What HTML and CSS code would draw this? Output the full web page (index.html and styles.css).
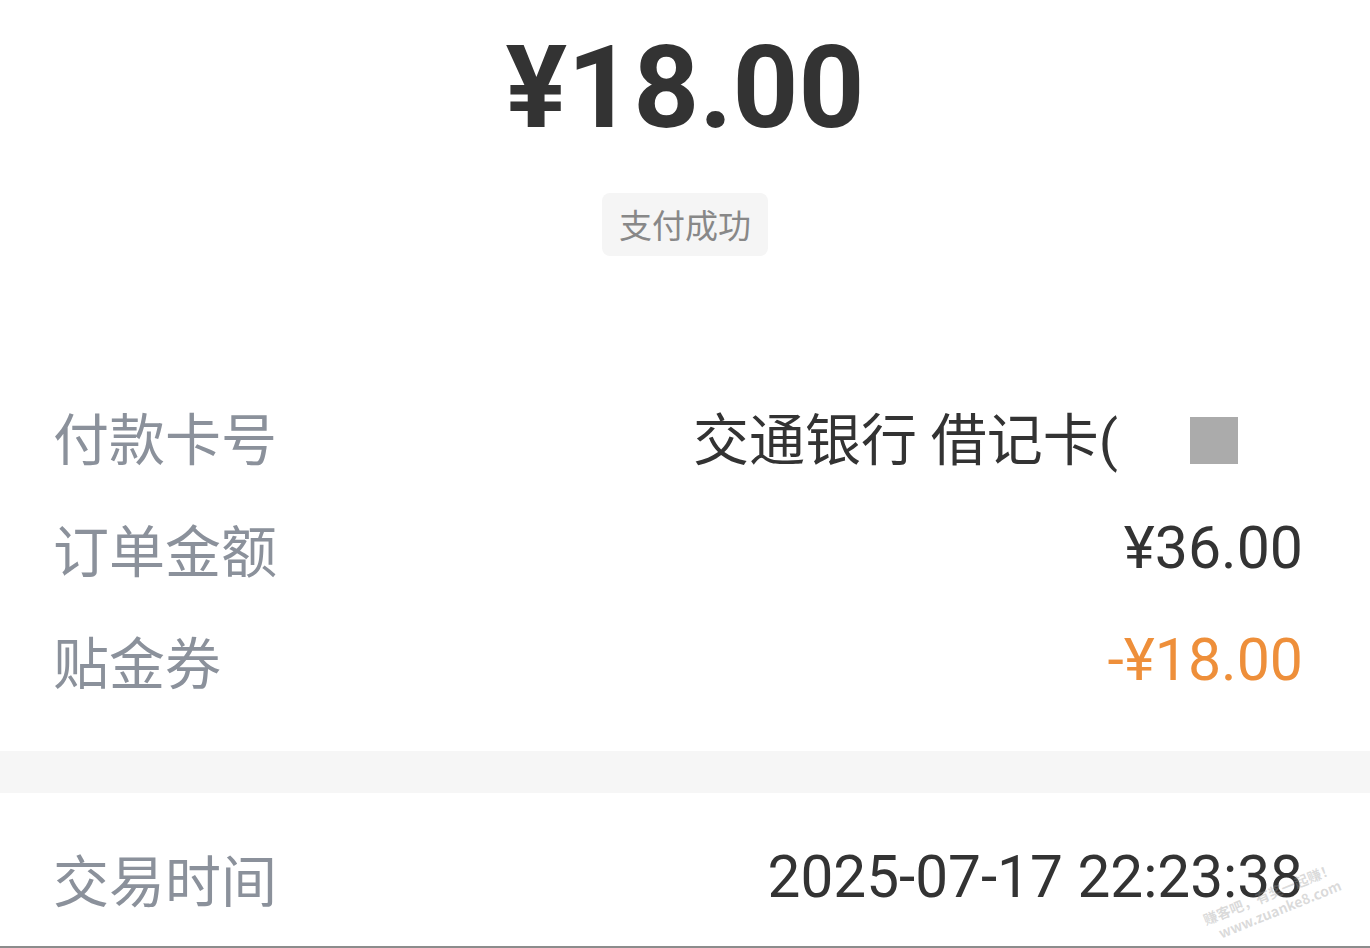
FILE: index.html
```html
<!DOCTYPE html>
<html lang="zh-CN">
<head>
    <meta charset="UTF-8">
    <meta name="viewport" content="width=device-width, initial-scale=1.0">
    <title>交易详情</title>
    <link rel="stylesheet" href="styles.css">
</head>
<body>

    <div class="page">
        <div class="summary">
            <div class="amount">¥18.00</div>
            <div class="status">支付成功</div>
        </div>

        <div class="details">
            <div class="row">
                <span class="label">付款卡号</span>
                <span class="value card">交通银行 借记卡(<span class="mask"></span></span>
            </div>
            <div class="row">
                <span class="label">订单金额</span>
                <span class="value">¥36.00</span>
            </div>
            <div class="row">
                <span class="label">贴金券</span>
                <span class="value discount">-¥18.00</span>
            </div>
        </div>

        <div class="divider"></div>

        <div class="details details-bottom">
            <div class="row">
                <span class="label">交易时间</span>
                <span class="value date">2025-07-17 22:23:38</span>
            </div>
        </div>

        <div class="watermark">
            <span>赚客吧，有奖一起赚！</span>
            <span>www.zuanke8.com</span>
        </div>
    </div>

</body>
</html>
```

FILE: styles.css
```css
body {
    margin: 0;
    background: #ffffff;
    font-family: Roboto, "Noto Sans CJK SC", sans-serif;
    color: #333333;
}

.page {
    position: relative;
    height: 946px;
    border-bottom: 2px solid #8c8c8c;
    overflow: hidden;
}

.summary {
    display: flex;
    flex-direction: column;
    align-items: center;
    padding-top: 16px;
}

.amount {
    font-size: 115px;
    font-weight: 700;
    line-height: 144px;
    color: #333333;
}

.status {
    margin-top: 33px;
    padding: 0 17px;
    height: 63px;
    line-height: 63px;
    background: #f5f5f5;
    border-radius: 8px;
    font-family: "Noto Sans CJK SC", sans-serif;
    font-size: 33px;
    color: #888888;
}

.details {
    padding: 123px 67px 36px 53px;
}

.row {
    display: flex;
    justify-content: space-between;
    align-items: center;
    height: 112px;
}

.label {
    font-family: "Noto Sans CJK SC", sans-serif;
    font-size: 56px;
    color: #8b919b;
}

.value {
    display: flex;
    align-items: center;
    font-family: Roboto, "Noto Sans CJK SC", sans-serif;
    font-size: 59px;
    color: #333333;
}

.card {
    font-size: 56px;
}

.date {
    font-size: 58.5px;
}

.mask {
    display: inline-block;
    width: 48px;
    height: 47px;
    margin-left: 72px;
    margin-right: 65px;
    margin-top: 10px;
    background: #ababab;
}

.discount {
    color: #ee8f3a;
}

.divider {
    height: 42px;
    background: #f6f6f6;
}

.details-bottom {
    padding-top: 28px;
    padding-bottom: 0;
}

.watermark {
    position: absolute;
    right: 28px;
    bottom: 26px;
    display: flex;
    flex-direction: column;
    align-items: flex-end;
    transform: rotate(-22deg);
    font-family: "Noto Sans CJK SC", sans-serif;
    font-size: 14px;
    font-weight: 700;
    color: rgba(150, 150, 150, 0.35);
    line-height: 18px;
}
```
